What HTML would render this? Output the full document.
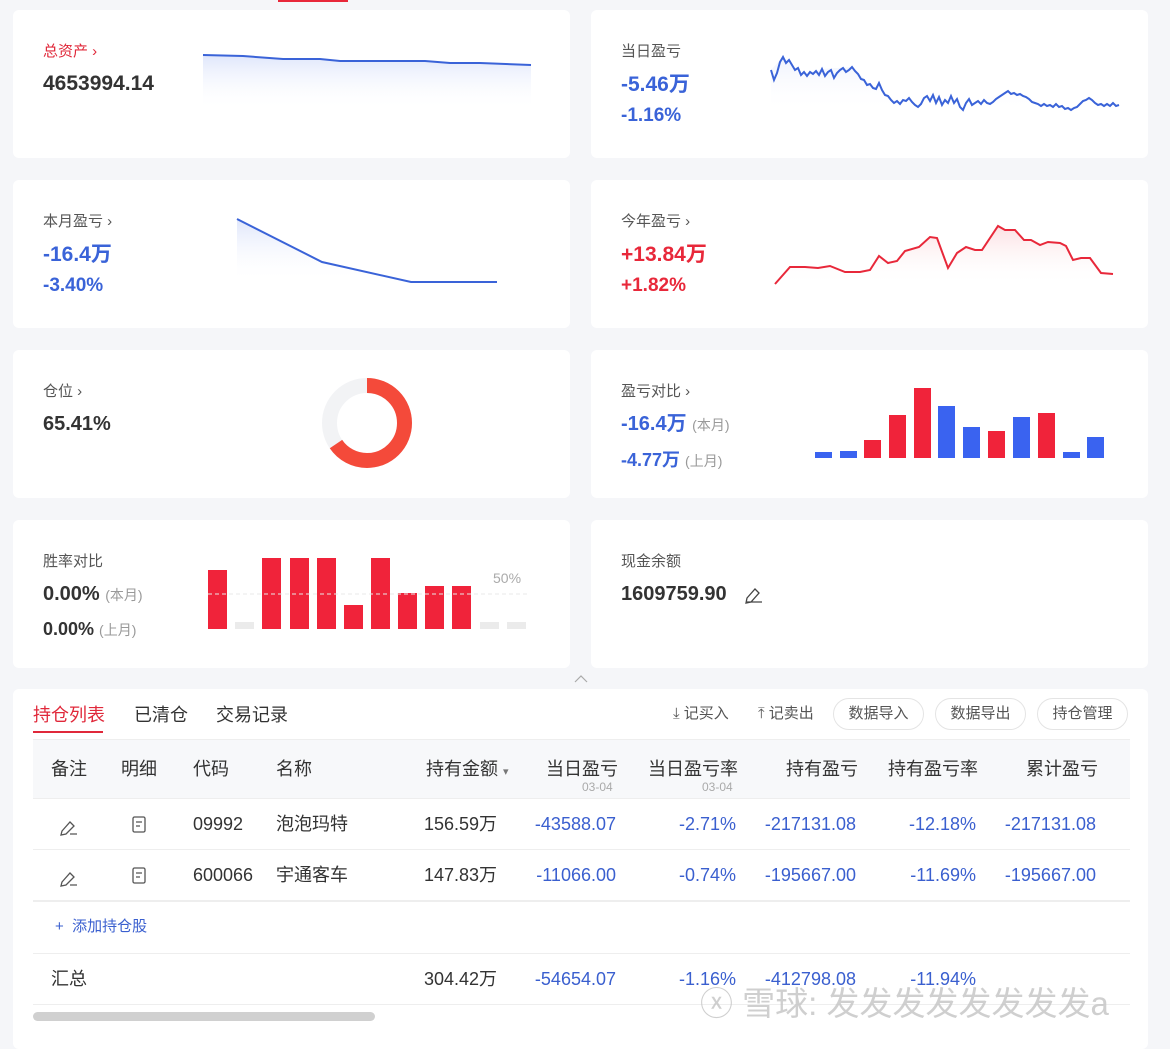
<!DOCTYPE html>
<html><head><meta charset="utf-8"><style>
*{margin:0;padding:0;box-sizing:border-box}
body{width:1170px;height:1040px;background:#f5f6f9;font-family:"Liberation Sans","Noto Sans CJK SC",sans-serif;position:relative;overflow:hidden;color:#333;line-height:24px}
.card{position:absolute;background:#fff;border-radius:6px;width:557px;height:148px}
.a{position:absolute;white-space:nowrap}
.lbl{font-size:15px;color:#555}
.big{font-size:21px;font-weight:bold;line-height:26px}
.blue{color:#3a63d8}.red{color:#e8283a}
.sm{font-size:14px;color:#999;font-weight:normal}
.t{font-size:18px;color:#333;line-height:22px}
.n{font-size:18px;color:#3a5fcf;text-align:right;line-height:22px}
.btn{position:absolute;top:698px;height:32px;border:1px solid #e4e4e4;border-radius:16px;font-size:15px;color:#555;line-height:30px;text-align:center}
</style></head><body>
<div class="a" style="left:278px;top:0;width:70px;height:2px;background:#e8283a"></div>
<div class="card" style="left:13px;top:10px"></div>
<div class="card" style="left:591px;top:10px"></div>
<div class="card" style="left:13px;top:180px"></div>
<div class="card" style="left:591px;top:180px"></div>
<div class="card" style="left:13px;top:350px"></div>
<div class="card" style="left:591px;top:350px"></div>
<div class="card" style="left:13px;top:520px"></div>
<div class="card" style="left:591px;top:520px"></div>
<div class="a" style="left:13px;top:689px;width:1135px;height:360px;background:#fff;border-radius:6px"></div>

<svg class="a" style="left:0;top:0" width="1170" height="690">
<defs>
<linearGradient id="gb" x1="0" y1="0" x2="0" y2="1"><stop offset="0" stop-color="#dfe6fb"/><stop offset="1" stop-color="#fff" stop-opacity="0"/></linearGradient>
<linearGradient id="gr" x1="0" y1="0" x2="0" y2="1"><stop offset="0" stop-color="#fcdfe2"/><stop offset="1" stop-color="#fff" stop-opacity="0"/></linearGradient>
</defs>
<path d="M203,55 L243,56 L283,59 L320,59 L340,61 L380,61 L425,61 L450,63 L480,63 L531,65 L531,110 L203,110Z" fill="url(#gb)"/>
<path d="M203,55 L243,56 L283,59 L320,59 L340,61 L380,61 L425,61 L450,63 L480,63 L531,65" fill="none" stroke="#3a63d8" stroke-width="2"/>
<path d="M237,219 L322,262 L411,282 L497,282 L237,282Z" fill="url(#gb)"/>
<path d="M237,219 L322,262 L411,282 L497,282" fill="none" stroke="#3a63d8" stroke-width="2"/>
<path d="M771,70 L783,57 L801,75 L822,69 L852,67 L870,84 L900,104 L960,107 L1008,91 L1071,110 L1119,105 L1119,112 L771,112Z" fill="url(#gb)" opacity=".5"/>
<polyline fill="none" stroke="#3a63d8" stroke-width="2" points="771,70 774,80 777,73 780,62 783,57 786,63 789,60 792,65 795,70 798,68 801,75 804,72 807,76 810,72 813,74 816,71 819,75 822,69 825,76 828,72 831,70 834,78 837,73 840,70 843,68 846,72 849,70 852,67 855,71 858,74 861,79 864,80 867,85 870,84 873,88 876,89 879,83 882,90 885,95 888,96 891,100 894,103 897,101 900,104 903,100 906,101 909,98 912,102 915,105 918,107 921,104 924,98 927,96 930,101 933,95 936,103 939,97 942,105 945,100 948,103 951,96 954,103 957,99 960,107 963,110 966,103 969,99 972,105 975,103 978,101 981,104 984,100 987,103 990,104 993,102 996,99 999,97 1002,95 1005,93 1008,91 1011,94 1014,93 1017,95 1020,94 1023,96 1026,97 1029,99 1032,102 1035,103 1038,104 1041,106 1044,104 1047,106 1050,105 1053,107 1056,104 1059,107 1062,106 1065,109 1068,108 1071,110 1074,108 1077,107 1080,104 1083,101 1086,100 1089,98 1092,100 1095,103 1098,105 1101,104 1104,106 1107,104 1110,106 1113,103 1116,106 1119,105"/>
<path d="M775,284 790,267 805,267 818,268 830,266 845,272 860,272 870,270 879,256 888,263 897,261 905,251 919,247 930,237 937,238 948,268 957,253 966,247 975,250 982,250 998,226 1005,230 1015,230 1024,240 1031,240 1040,245 1048,242 1060,243 1066,246 1073,260 1081,258 1090,258 1101,273 1113,274 L1113,285 L775,285Z" fill="url(#gr)"/>
<polyline fill="none" stroke="#e8283a" stroke-width="2" points="775,284 790,267 805,267 818,268 830,266 845,272 860,272 870,270 879,256 888,263 897,261 905,251 919,247 930,237 937,238 948,268 957,253 966,247 975,250 982,250 998,226 1005,230 1015,230 1024,240 1031,240 1040,245 1048,242 1060,243 1066,246 1073,260 1081,258 1090,258 1101,273 1113,274"/>
<circle cx="367" cy="423" r="37.5" fill="none" stroke="#f2f3f5" stroke-width="15"/>
<circle cx="367" cy="423" r="37.5" fill="none" stroke="#f44a3a" stroke-width="15" stroke-dasharray="154.1 300" transform="rotate(-90 367 423)"/>
<g fill="#3a63f0"><rect x="815" y="452" width="17" height="6"/><rect x="840" y="451" width="17" height="7"/><rect x="938" y="406" width="17" height="52"/><rect x="963" y="427" width="17" height="31"/><rect x="1013" y="417" width="17" height="41"/><rect x="1063" y="452" width="17" height="6"/><rect x="1087" y="437" width="17" height="21"/></g>
<g fill="#f0233a"><rect x="864" y="440" width="17" height="18"/><rect x="889" y="415" width="17" height="43"/><rect x="914" y="388" width="17" height="70"/><rect x="988" y="431" width="17" height="27"/><rect x="1038" y="413" width="17" height="45"/></g>
<g fill="#f0233a"><rect x="208" y="570" width="19" height="59"/><rect x="262" y="558" width="19" height="71"/><rect x="290" y="558" width="19" height="71"/><rect x="317" y="558" width="19" height="71"/><rect x="344" y="605" width="19" height="24"/><rect x="371" y="558" width="19" height="71"/><rect x="398" y="593" width="19" height="36"/><rect x="425" y="586" width="19" height="43"/><rect x="452" y="586" width="19" height="43"/></g>
<g fill="#ebebeb"><rect x="235" y="622" width="19" height="7"/><rect x="480" y="622" width="19" height="7"/><rect x="507" y="622" width="19" height="7"/></g>
<line x1="208" y1="594" x2="530" y2="594" stroke="#e8e8e8" stroke-dasharray="4 3"/>
<path d="M575,682 L581,676 L587,682" fill="none" stroke="#aaa" stroke-width="1.2"/>
<path d="M747,598 L755,589 L759,593 L751,602 L746,603Z M747,602 L762,602" fill="none" stroke="#444" stroke-width="1.3"/>
</svg>

<div class="a lbl red" style="left:43px;top:40px;color:#e0283a">总资产 ›</div>
<div class="a big" style="left:43px;top:71px">4653994.14</div>
<div class="a lbl" style="left:621px;top:40px">当日盈亏</div>
<div class="a big blue" style="left:621px;top:72px">-5.46万</div>
<div class="a big blue" style="left:621px;top:103px;font-size:19px">-1.16%</div>
<div class="a lbl" style="left:43px;top:210px">本月盈亏 ›</div>
<div class="a big blue" style="left:43px;top:242px">-16.4万</div>
<div class="a big blue" style="left:43px;top:273px;font-size:19px">-3.40%</div>
<div class="a lbl" style="left:621px;top:210px">今年盈亏 ›</div>
<div class="a big red" style="left:621px;top:242px">+13.84万</div>
<div class="a big red" style="left:621px;top:273px;font-size:19px">+1.82%</div>
<div class="a lbl" style="left:43px;top:380px">仓位 ›</div>
<div class="a big" style="left:43px;top:411px;font-size:20px">65.41%</div>
<div class="a lbl" style="left:621px;top:380px">盈亏对比 ›</div>
<div class="a big blue" style="left:621px;top:411px;font-size:20px">-16.4万 <span class="sm">(本月)</span></div>
<div class="a big blue" style="left:621px;top:447px;font-size:18px">-4.77万 <span class="sm">(上月)</span></div>
<div class="a lbl" style="left:43px;top:550px">胜率对比</div>
<div class="a big" style="left:43px;top:581px;font-size:20px">0.00% <span class="sm">(本月)</span></div>
<div class="a big" style="left:43px;top:616px;font-size:18px">0.00% <span class="sm">(上月)</span></div>
<div class="a" style="left:493px;top:566px;font-size:14px;color:#aaa">50%</div>
<div class="a lbl" style="left:621px;top:550px">现金余额</div>
<div class="a big" style="left:621px;top:581px;font-size:20px">1609759.90</div>

<div class="a" style="left:33px;top:703px;font-size:18px;color:#e0283a">持仓列表</div>
<div class="a" style="left:33px;top:731px;width:70px;height:2px;background:#e0283a"></div>
<div class="a t" style="left:134px;top:704px">已清仓</div>
<div class="a t" style="left:216px;top:704px">交易记录</div>
<div class="a" style="left:673px;top:702px;font-size:15px;color:#555">⤓ 记买入</div>
<div class="a" style="left:758px;top:702px;font-size:15px;color:#555">⤒ 记卖出</div>
<div class="btn" style="left:833px;width:91px">数据导入</div>
<div class="btn" style="left:935px;width:91px">数据导出</div>
<div class="btn" style="left:1037px;width:91px">持仓管理</div>
<div class="a" style="left:33px;top:739px;width:1097px;height:1px;background:#eee"></div>
<div class="a" style="left:33px;top:740px;width:1097px;height:58px;background:#f7f8fa"></div>
<div class="a t" style="left:51px;top:758px">备注</div>
<div class="a t" style="left:121px;top:758px">明细</div>
<div class="a t" style="left:193px;top:758px">代码</div>
<div class="a t" style="left:276px;top:758px">名称</div>
<div class="a t" style="left:426px;top:758px">持有金额 <span style="font-size:11px;color:#777">▾</span></div>
<div class="a t" style="left:546px;top:758px">当日盈亏</div>
<div class="a" style="left:582px;top:779px;font-size:12px;color:#aaa;line-height:16px">03-04</div>
<div class="a t" style="left:648px;top:758px">当日盈亏率</div>
<div class="a" style="left:702px;top:779px;font-size:12px;color:#aaa;line-height:16px">03-04</div>
<div class="a t" style="left:786px;top:758px">持有盈亏</div>
<div class="a t" style="left:888px;top:758px">持有盈亏率</div>
<div class="a t" style="left:1026px;top:758px">累计盈亏</div>
<div class="a" style="left:33px;top:798px;width:1097px;height:1px;background:#eee"></div>
<div class="a" style="left:33px;top:849px;width:1097px;height:1px;background:#eee"></div>
<div class="a" style="left:33px;top:900px;width:1097px;height:2px;background:#eee"></div>
<div class="a" style="left:33px;top:953px;width:1097px;height:1px;background:#eee"></div>
<div class="a" style="left:33px;top:1004px;width:1097px;height:1px;background:#eee"></div>

<svg class="a" style="left:0;top:800px" width="200" height="100">
<g fill="none" stroke="#555" stroke-width="1.3">
<path d="M62,31 L70,22 L74,26 L66,34 L61,35Z M70,34 L77,34"/>
<path d="M62,82 L70,73 L74,77 L66,85 L61,86Z M70,85 L77,85"/>
<rect x="133" y="17" width="12" height="15" rx="1.5"/><path d="M136,22 H142 M136,26 H140"/>
<rect x="133" y="68" width="12" height="15" rx="1.5"/><path d="M136,73 H142 M136,77 H140"/>
</g></svg>
<div class="a t" style="left:193px;top:813px">09992</div>
<div class="a t" style="left:276px;top:813px">泡泡玛特</div>
<div class="a t" style="left:424px;top:813px">156.59万</div>
<div class="a n" style="right:554px;top:813px">-43588.07</div>
<div class="a n" style="right:434px;top:813px">-2.71%</div>
<div class="a n" style="right:314px;top:813px">-217131.08</div>
<div class="a n" style="right:194px;top:813px">-12.18%</div>
<div class="a n" style="right:74px;top:813px">-217131.08</div>
<div class="a t" style="left:193px;top:864px">600066</div>
<div class="a t" style="left:276px;top:864px">宇通客车</div>
<div class="a t" style="left:424px;top:864px">147.83万</div>
<div class="a n" style="right:554px;top:864px">-11066.00</div>
<div class="a n" style="right:434px;top:864px">-0.74%</div>
<div class="a n" style="right:314px;top:864px">-195667.00</div>
<div class="a n" style="right:194px;top:864px">-11.69%</div>
<div class="a n" style="right:74px;top:864px">-195667.00</div>
<div class="a" style="left:55px;top:915px;font-size:15px;color:#3a5fcf">+ &nbsp;添加持仓股</div>
<div class="a t" style="left:51px;top:968px">汇总</div>
<div class="a t" style="left:424px;top:968px">304.42万</div>
<div class="a n" style="right:554px;top:968px">-54654.07</div>
<div class="a n" style="right:434px;top:968px">-1.16%</div>
<div class="a n" style="right:314px;top:968px">-412798.08</div>
<div class="a n" style="right:194px;top:968px">-11.94%</div>
<div class="a" style="left:33px;top:1012px;width:342px;height:9px;border-radius:5px;background:#d0d0d0"></div>
<div class="a" style="left:700px;top:984px;font-size:33px;line-height:40px;color:rgba(195,195,195,.8)">ⓧ 雪球: 发发发发发发发发a</div>
</body></html>
